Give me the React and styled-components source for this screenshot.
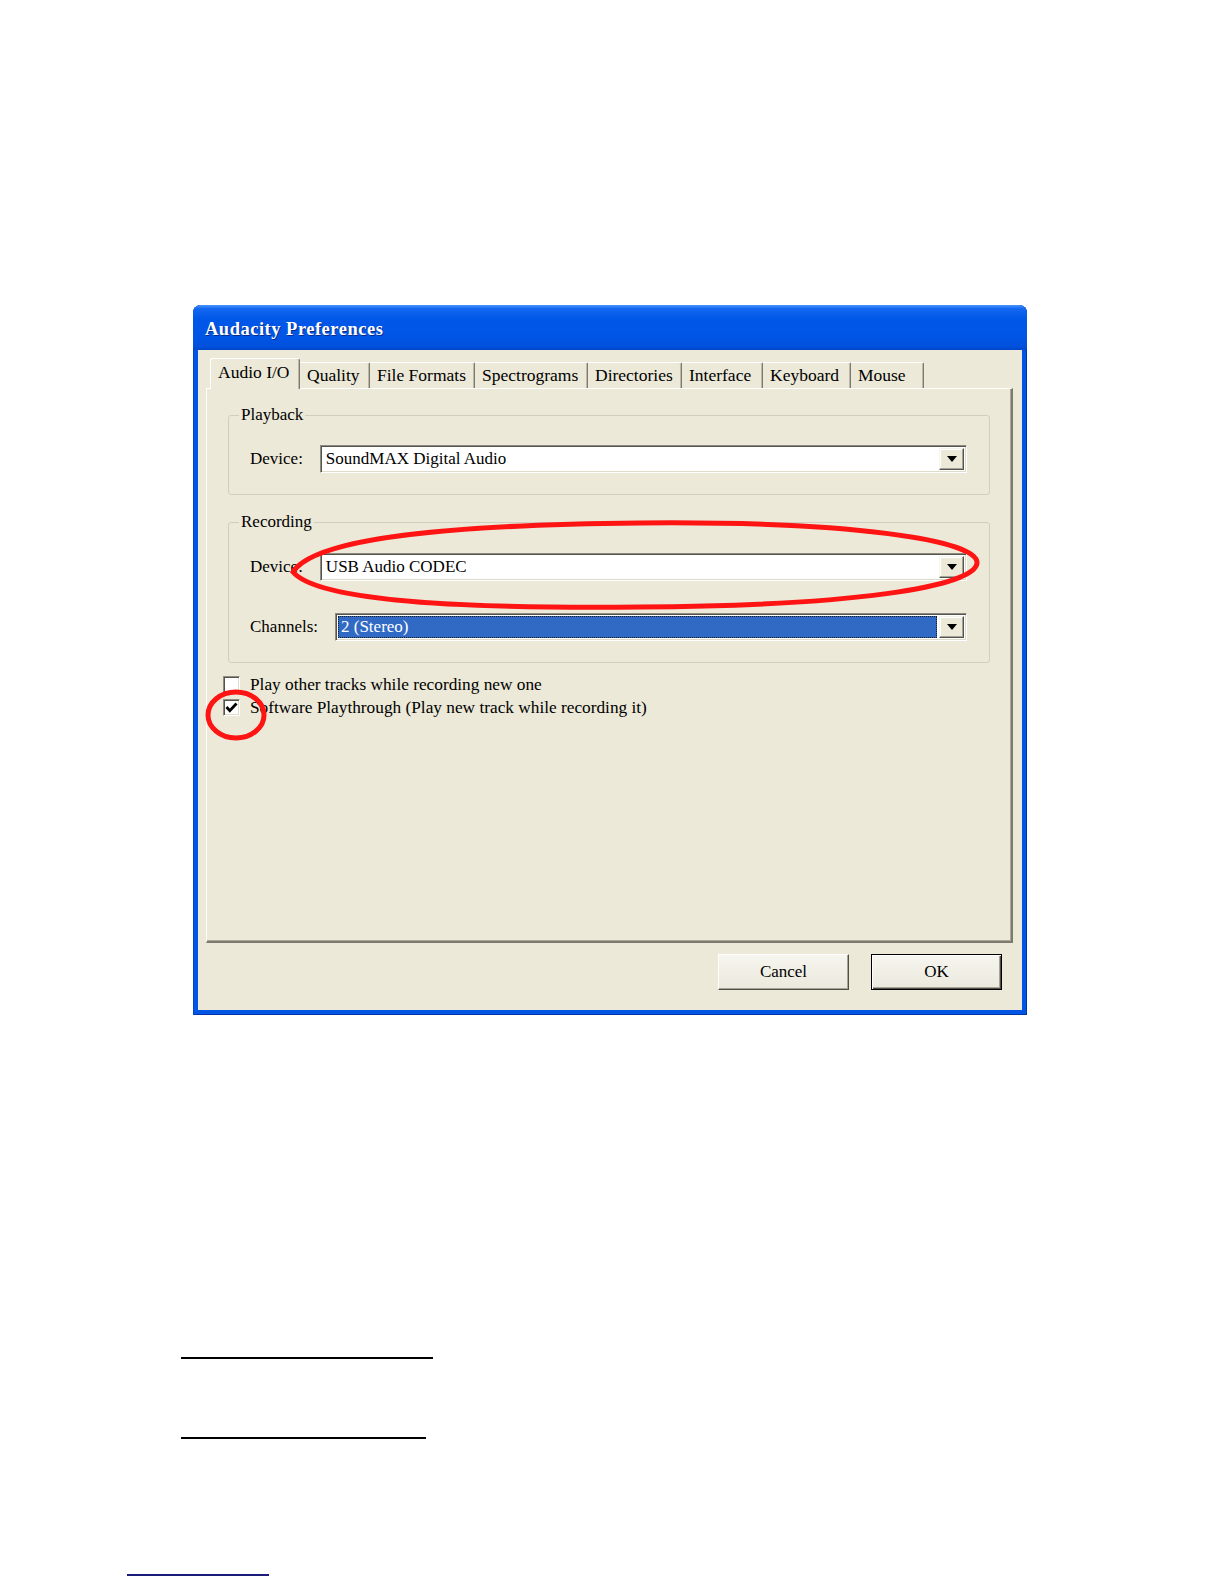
import React from "react";
import styled, { createGlobalStyle } from "styled-components";

const GlobalStyle = createGlobalStyle`
  html, body {
    margin: 0;
    padding: 0;
    background: #fff;
  }
  body {
    font-family: "Liberation Serif", "DejaVu Serif", serif;
    color: #000;
  }
`;

const Page = styled.div`
  position: relative;
  width: 1224px;
  height: 1584px;
  padding-top: 305px;
  box-sizing: border-box;
  display: flex;
  flex-direction: column;
  align-items: flex-start;
`;

const Window = styled.div`
  margin-left: 193px;
  width: 834px;
  height: 710px;
  box-sizing: border-box;
  padding: 0 5px 5px;
  display: flex;
  flex-direction: column;
  border-radius: 8px 8px 0 0;
  background: #0055e5;
  box-shadow: inset 1px 0 0 #0046c8, inset -1px 0 0 #0035a8, inset 0 -1px 0 #0035a8;
`;

const TitleBar = styled.div`
  height: 45px;
  margin: 0 -5px;
  padding: 4px 0 0 12px;
  box-sizing: border-box;
  display: flex;
  align-items: center;
  border-radius: 8px 8px 0 0;
  background: linear-gradient(
    #4a96ff 0%,
    #1468f0 8%,
    #0058e8 30%,
    #0055e5 70%,
    #0050dc 92%,
    #0046c8 100%
  );
  color: #fff;
  font-size: 18.5px;
  font-weight: bold;
  letter-spacing: 0.5px;
  text-shadow: 1px 1px 0 #0b2a8a;
`;

const Client = styled.div`
  flex: 1;
  background: #ece9d8;
  padding: 8px 9px 0 8px;
  display: flex;
  flex-direction: column;
`;

const TabStrip = styled.div`
  height: 30px;
  padding-left: 4px;
  display: flex;
  align-items: flex-end;
  position: relative;
  z-index: 1;
`;

const Tab = styled.div`
  width: ${p => p.w}px;
  height: ${p => (p.active ? 31 : 26)}px;
  margin-bottom: ${p => (p.active ? -1 : 0)}px;
  box-sizing: border-box;
  padding-left: 7px;
  padding-bottom: ${p => (p.active ? 4 : 1)}px;
  display: flex;
  align-items: center;
  font-size: 17.5px;
  white-space: nowrap;
  background: #ece9d8;
  border-top: 1px solid #fff;
  border-left: ${p => (p.active ? "1px solid #fff" : "none")};
  border-right: 1px solid #7d7b70;
  border-radius: ${p => (p.active ? "3px 3px 0 0" : "0 2px 0 0")};
  box-shadow: inset -1px 0 0 #bcb9a8;
`;

const Panel = styled.div`
  height: 555px;
  box-sizing: border-box;
  padding: 15px 21px 0 21px;
  background: #ece9d8;
  border-top: 1px solid #fff;
  border-left: 1px solid #fff;
  border-right: 2px solid #7d7b70;
  border-bottom: 2px solid #7d7b70;
  box-shadow: inset -1px -1px 0 #aca899;
  display: flex;
  flex-direction: column;
`;

const Group = styled.fieldset`
  margin: ${p => p.top}px 0 0;
  padding: ${p => p.padTop}px 22px ${p => p.padBottom}px 21px;
  border: 1px solid #d0cebf;
  border-radius: 3px;
  display: flex;
  flex-direction: column;
  gap: ${p => p.gap || 0}px;
`;

const Legend = styled.legend`
  margin-left: -11px;
  padding: 0 2px;
  font-size: 17px;
  line-height: 22px;
`;

const FieldRow = styled.div`
  display: flex;
  align-items: center;
  gap: 17px;
`;

const Label = styled.span`
  font-size: 17px;
  white-space: nowrap;
`;

const Combo = styled.div`
  flex: 1;
  height: 28px;
  box-sizing: border-box;
  padding: 2px;
  display: flex;
  background: #fff;
  border-top: 1px solid #8d8b80;
  border-left: 1px solid #8d8b80;
  border-bottom: 1px solid #fff;
  border-right: 1px solid #fff;
  box-shadow: inset 1px 1px 0 #55544c, inset -1px -1px 0 #dedbcb;
`;

const ComboValue = styled.div`
  flex: 1;
  margin-right: 2px;
  padding-left: 2px;
  display: flex;
  align-items: center;
  font-size: 17px;
  white-space: nowrap;
  box-sizing: border-box;
  color: ${p => (p.selected ? "#fff" : "#000")};
  background: ${p => (p.selected ? "#316ac5" : "transparent")};
  border: 1px ${p => (p.selected ? "dotted #1a1a1a" : "solid transparent")};
`;

const DropButton = styled.div`
  width: 23px;
  display: flex;
  align-items: center;
  justify-content: center;
  background: #ece9d8;
  border-top: 1px solid #f4f3ee;
  border-left: 1px solid #f4f3ee;
  border-right: 1px solid #55544c;
  border-bottom: 1px solid #55544c;
  box-shadow: inset -1px -1px 0 #a6a496, inset 1px 1px 0 #fff;
`;

const CheckList = styled.div`
  margin-top: 10px;
  margin-left: -5px;
  display: flex;
  flex-direction: column;
`;

const CheckRow = styled.label`
  height: 23px;
  display: flex;
  align-items: center;
  gap: 10px;
  font-size: 17.3px;
  white-space: nowrap;
`;

const CheckBox = styled.span`
  width: 17px;
  height: 17px;
  box-sizing: border-box;
  display: flex;
  align-items: center;
  justify-content: center;
  background: #fff;
  border-top: 1px solid #8d8b80;
  border-left: 1px solid #8d8b80;
  border-bottom: 1px solid #fff;
  border-right: 1px solid #fff;
  box-shadow: inset 1px 1px 0 #55544c, inset -1px -1px 0 #dedbcb;
`;

const ButtonRow = styled.div`
  margin-top: 11px;
  padding-right: 11px;
  display: flex;
  justify-content: flex-end;
  gap: 22px;
`;

const Button = styled.button`
  width: 131px;
  height: 36px;
  box-sizing: border-box;
  padding: 0;
  font-family: "Liberation Serif", "DejaVu Serif", serif;
  font-size: 17px;
  color: #000;
  background: linear-gradient(#f6f5ef, #ebe9dd);
  border-top: 1px solid ${p => (p.primary ? "#000" : "#fff")};
  border-left: 1px solid ${p => (p.primary ? "#000" : "#fff")};
  border-right: 1px solid ${p => (p.primary ? "#000" : "#4f4e47")};
  border-bottom: 1px solid ${p => (p.primary ? "#000" : "#4f4e47")};
  box-shadow: ${p =>
    p.primary
      ? "inset 1px 1px 0 #fff, inset -1px -1px 0 #4f4e47, inset -2px -2px 0 #a6a496"
      : "inset -1px -1px 0 #a6a496"};
`;

const Rule = styled.div`
  margin-left: ${p => p.left}px;
  margin-top: ${p => p.top}px;
  width: ${p => p.w}px;
  height: 2px;
  background: ${p => p.color || "#000"};
`;

const Annotation = styled.svg`
  position: absolute;
  left: 0;
  top: 0;
  width: 1224px;
  height: 1584px;
  pointer-events: none;
`;

const tabs = [
  { name: "Audio I/O", w: 90 },
  { name: "Quality", w: 70 },
  { name: "File Formats", w: 105 },
  { name: "Spectrograms", w: 113 },
  { name: "Directories", w: 94 },
  { name: "Interface", w: 81 },
  { name: "Keyboard", w: 88 },
  { name: "Mouse", w: 73 },
];

const Arrow = () => (
  <svg width="10" height="6" viewBox="0 0 10 6">
    <path d="M0 0 H10 L5 6 Z" fill="#000" />
  </svg>
);

const Check = () => (
  <svg width="13" height="13" viewBox="0 0 13 13">
    <path d="M1.5 6 L4.8 9.6 L11.5 2.5" fill="none" stroke="#000" strokeWidth="2.8" />
  </svg>
);

const Field = ({ label, value, selected }) => (
  <FieldRow>
    <Label>{label}</Label>
    <Combo>
      <ComboValue selected={selected}>{value}</ComboValue>
      <DropButton>
        <Arrow />
      </DropButton>
    </Combo>
  </FieldRow>
);

export default function App() {
  return (
    <>
      <GlobalStyle />
      <Page>
        <Window>
          <TitleBar>Audacity Preferences</TitleBar>
          <Client>
            <TabStrip>
              {tabs.map((t, i) => (
                <Tab key={t.name} w={t.w} active={i === 0}>
                  {t.name}
                </Tab>
              ))}
            </TabStrip>
            <Panel>
              <Group top={0} padTop={19} padBottom={21}>
                <Legend>Playback</Legend>
                <Field label="Device:" value="SoundMAX Digital Audio" />
              </Group>
              <Group top={16} padTop={20} padBottom={21} gap={32}>
                <Legend>Recording</Legend>
                <Field label="Device:" value="USB Audio CODEC" />
                <Field label="Channels:" value="2 (Stereo)" selected />
              </Group>
              <CheckList>
                <CheckRow>
                  <CheckBox />
                  Play other tracks while recording new one
                </CheckRow>
                <CheckRow>
                  <CheckBox>
                    <Check />
                  </CheckBox>
                  Software Playthrough (Play new track while recording it)
                </CheckRow>
              </CheckList>
            </Panel>
            <ButtonRow>
              <Button>Cancel</Button>
              <Button primary>OK</Button>
            </ButtonRow>
          </Client>
        </Window>
        <Rule left={181} top={342} w={252} />
        <Rule left={181} top={78} w={245} />
        <Rule left={127} top={135} w={142} color="#1c1c7a" />
        <Annotation viewBox="0 0 1224 1584">
          <path
            d="M 293 572 C 312 542, 420 525, 640 523 C 850 521, 979 540, 977 563 C 975 587, 850 606, 640 607 C 430 609, 315 598, 293 572 Z"
            fill="none"
            stroke="#ff1414"
            strokeWidth="5"
          />
          <ellipse cx="236" cy="715" rx="28" ry="23" fill="none" stroke="#ff1414" strokeWidth="5" />
        </Annotation>
      </Page>
    </>
  );
}
